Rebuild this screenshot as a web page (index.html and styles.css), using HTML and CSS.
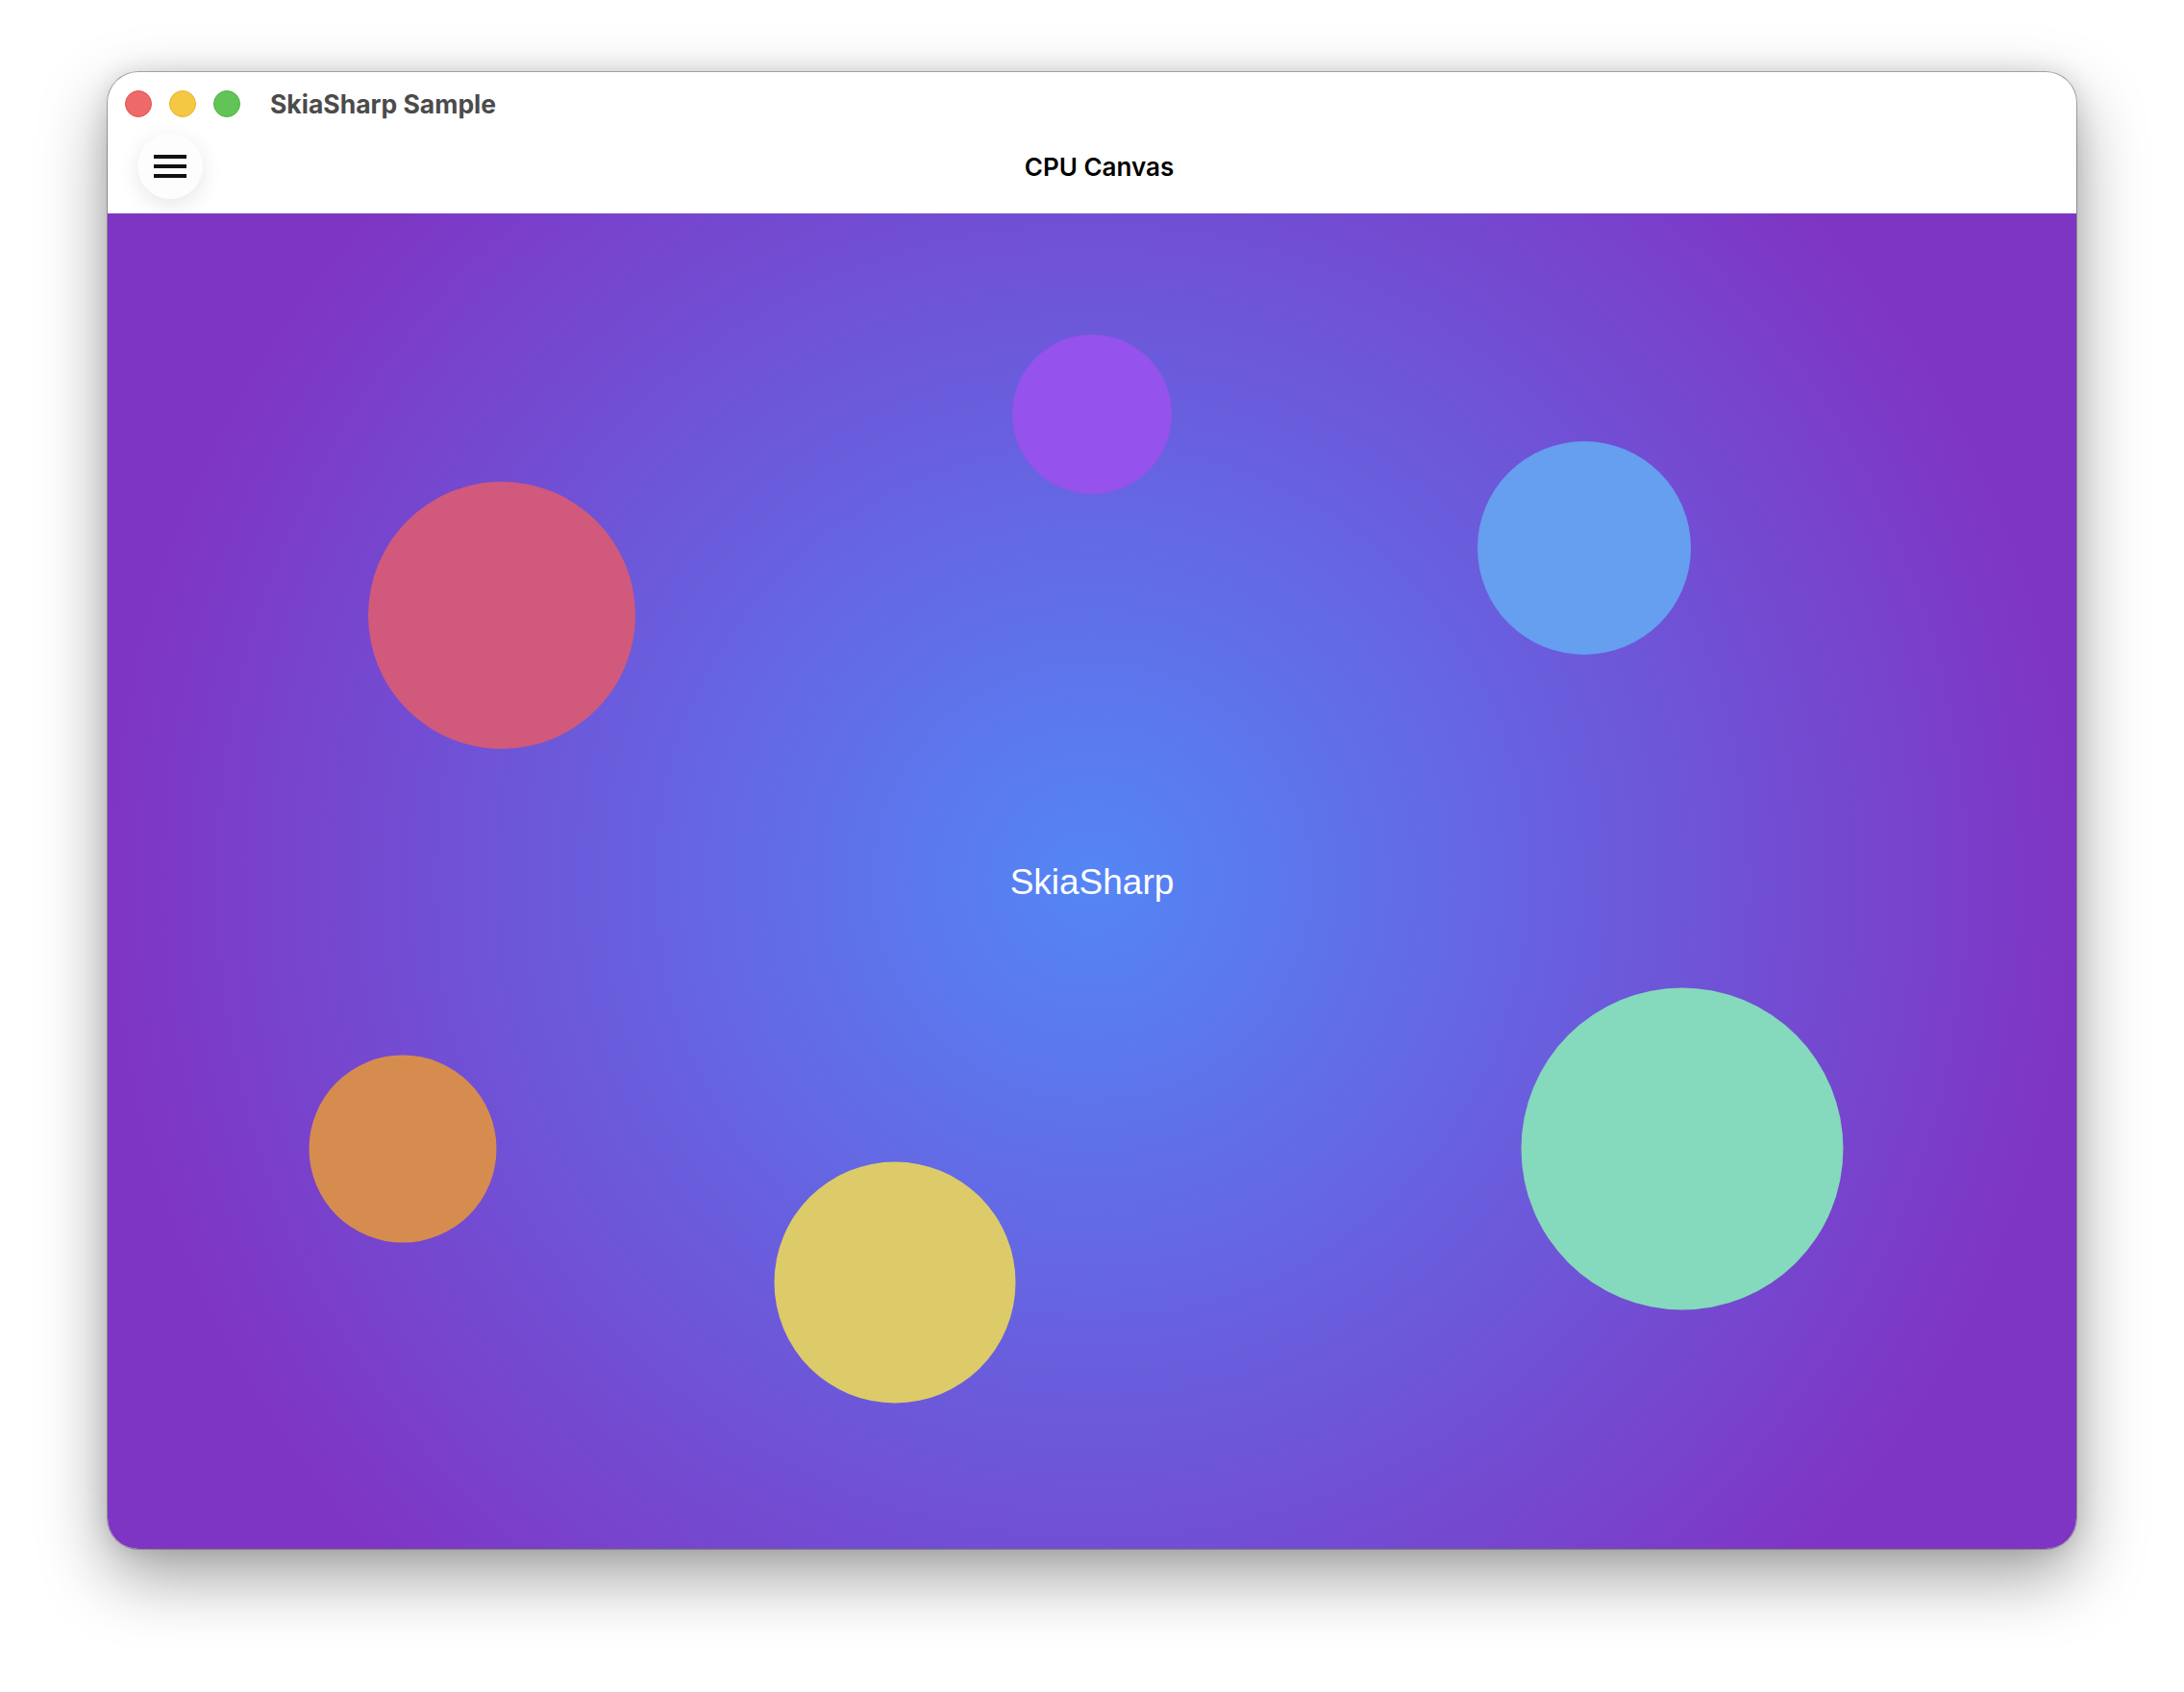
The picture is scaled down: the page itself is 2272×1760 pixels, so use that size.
FILE: index.html
```html
<!DOCTYPE html>
<html lang="en">
<head>
    <meta charset="UTF-8">
    <meta name="viewport" content="width=device-width, initial-scale=1.0">
    <title>SkiaSharp Sample</title>
    <link rel="stylesheet" href="styles.css">
</head>
<body>
    <div class="window">
        <header class="window-header">
            <div class="titlebar">
                <div class="lights">
                    <span class="light red"></span>
                    <span class="light yellow"></span>
                    <span class="light green"></span>
                </div>
                <span class="window-title">SkiaSharp Sample</span>
            </div>
            <div class="navbar">
                <button class="menu-btn" aria-label="Menu">
                    <svg width="34" height="24" viewBox="0 0 34 24">
                        <rect x="0" y="0" width="34" height="4" fill="#111"/>
                        <rect x="0" y="10" width="34" height="4" fill="#111"/>
                        <rect x="0" y="20" width="34" height="4" fill="#111"/>
                    </svg>
                </button>
                <h1 class="page-title">CPU Canvas</h1>
                <div class="nav-spacer"></div>
            </div>
        </header>
        <main class="canvas">
            <span class="dot dot-purple"></span>
            <span class="dot dot-red"></span>
            <span class="dot dot-blue"></span>
            <span class="dot dot-orange"></span>
            <span class="dot dot-yellow"></span>
            <span class="dot dot-green"></span>
            <p class="canvas-label">SkiaSharp</p>
        </main>
    </div>
</body>
</html>
```

FILE: styles.css
```css
html, body {
    margin: 0;
    padding: 0;
    background-color: #ffffff;
}
body {
    padding: 75px 112px 149px;
    font-family: 'Inter', 'Liberation Sans', sans-serif;
}
.window {
    width: 2048px;
    height: 1536px;
    display: flex;
    flex-direction: column;
    background: white;
    border-radius: 32px;
    overflow: hidden;
    box-shadow: 0 0 0 1px rgba(0, 0, 0, 0.28), 0 28px 70px rgba(0, 0, 0, 0.38), 0 0 24px rgba(0, 0, 0, 0.12);
}
.window-header {
    height: 147px;
    display: flex;
    flex-direction: column;
    flex-shrink: 0;
}
.titlebar {
    height: 66px;
    display: flex;
    align-items: center;
    padding-left: 18px;
}
.lights {
    display: flex;
    gap: 18px;
}
.light {
    width: 26px;
    height: 26px;
    border-radius: 50%;
    border: 1px solid transparent;
}
.light.red {
    background: #ee6a68;
    border-color: #e2514e;
}
.light.yellow {
    background: #f4c843;
    border-color: #e6b32e;
}
.light.green {
    background: #62c456;
    border-color: #4fb043;
}
.window-title {
    margin-left: 31px;
    font-size: 26.5px;
    font-weight: 700;
    color: #4b4b4b;
}
.navbar {
    height: 64px;
    display: flex;
    align-items: center;
    padding: 0 31px;
}
.menu-btn {
    width: 68px;
    height: 68px;
    border: none;
    border-radius: 50%;
    background: #fdfdfd;
    box-shadow: 0 6px 22px rgba(0, 0, 0, 0.10);
    display: flex;
    align-items: center;
    justify-content: center;
    padding: 0;
    cursor: pointer;
}
.page-title {
    flex: 1;
    margin: 0;
    text-align: center;
    font-size: 26px;
    font-weight: 600;
    color: #000;
    padding-left: 15px;
}
.nav-spacer {
    width: 68px;
}
.canvas {
    position: relative;
    flex: 1;
    background: radial-gradient(circle 1024px at 50% 50%, #5486f6 0%, #7f35c4 100%);
}
.dot {
    position: absolute;
    border-radius: 50%;
    transform: translate(-50%, -50%);
    margin-top: 1px;
}
.dot-purple {
    left: 50%;
    top: 15%;
    width: 166px;
    height: 166px;
    background: #9552ec;
}
.dot-red {
    left: 20%;
    top: 30%;
    width: 278px;
    height: 278px;
    background: #d1597b;
}
.dot-blue {
    left: 75%;
    top: 25%;
    width: 222px;
    height: 222px;
    background: #669ef0;
}
.dot-orange {
    left: 15%;
    top: 70%;
    width: 195px;
    height: 195px;
    background: #d78c4f;
}
.dot-yellow {
    left: 40%;
    top: 80%;
    width: 251px;
    height: 251px;
    background: #dccb68;
}
.dot-green {
    left: 80%;
    top: 70%;
    width: 335px;
    height: 335px;
    background: #85d9bc;
}
.canvas-label {
    position: absolute;
    left: 50%;
    top: 50%;
    margin: 1px 0 0;
    transform: translate(-50%, -50%);
    font-family: 'Liberation Sans', Arial, sans-serif;
    font-size: 37px;
    color: white;
}
```
